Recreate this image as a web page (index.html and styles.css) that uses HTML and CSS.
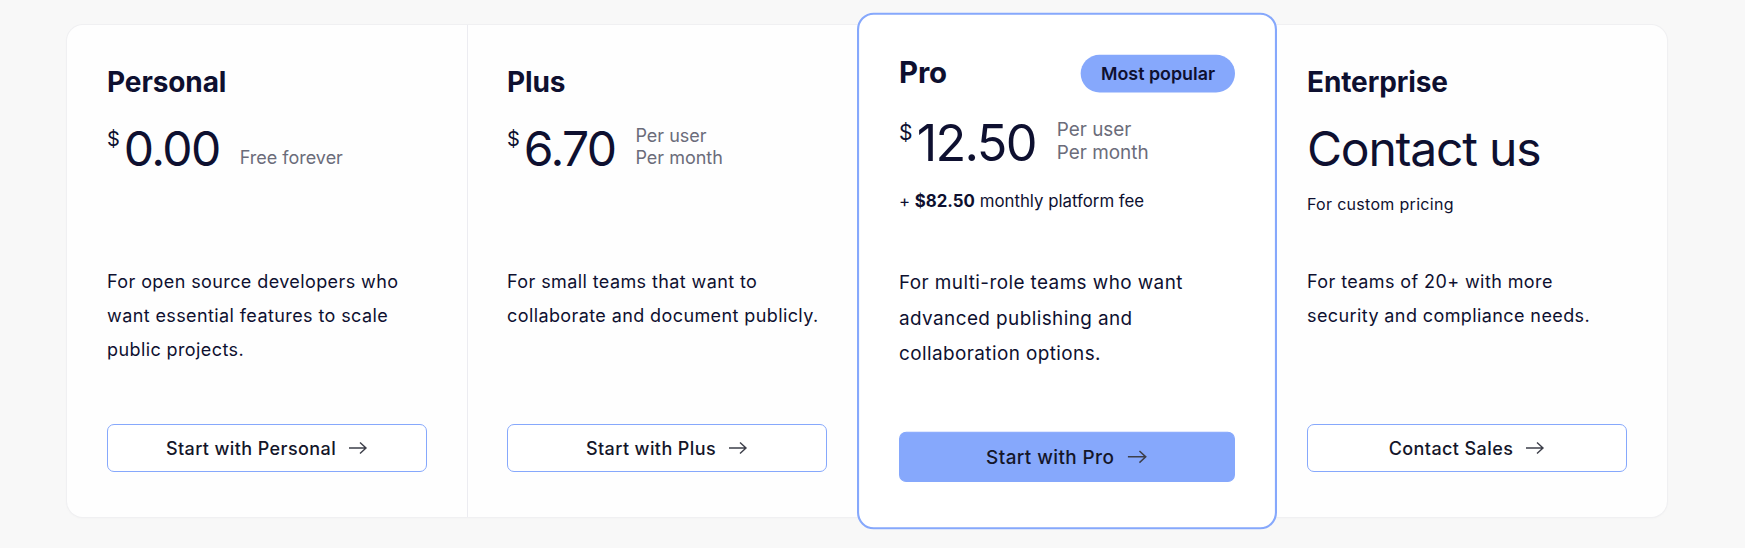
FILE: index.html
```html
<!DOCTYPE html>
<html lang="en">
<head>
<meta charset="utf-8">
<title>Pricing</title>
<link rel="stylesheet" href="styles.css">
</head>
<body>
<section class="pricing">
  <article class="plan">
    <div class="plan-head">
      <div class="title-row"><h2 class="plan-name">Personal</h2></div>
      <div class="price-row">
        <span class="currency">$</span><span class="amount">0.00</span>
        <span class="per">Free forever</span>
      </div>
    </div>
    <p class="desc">For open source developers who want essential features to scale public projects.</p>
    <a class="btn" href="#">Start with Personal <svg class="arrow" viewBox="0 0 20 14" width="20" height="14"><path d="M1 7H18M12 1.5L18 7L12 12.5" fill="none" stroke="currentColor" stroke-width="1.4"/></svg></a>
  </article>
  <article class="plan plan-divided">
    <div class="plan-head">
      <div class="title-row"><h2 class="plan-name">Plus</h2></div>
      <div class="price-row">
        <span class="currency">$</span><span class="amount">6.70</span>
        <span class="per">Per user<br>Per month</span>
      </div>
    </div>
    <p class="desc">For small teams that want to collaborate and document publicly.</p>
    <a class="btn" href="#">Start with Plus <svg class="arrow" viewBox="0 0 20 14" width="20" height="14"><path d="M1 7H18M12 1.5L18 7L12 12.5" fill="none" stroke="currentColor" stroke-width="1.4"/></svg></a>
  </article>
  <article class="plan plan-pro">
    <div class="plan-head">
      <div class="title-row"><h2 class="plan-name">Pro</h2><span class="badge">Most popular</span></div>
      <div class="price-row">
        <span class="currency">$</span><span class="amount">12.50</span>
        <span class="per">Per user<br>Per month</span>
      </div>
      <p class="sub">+ <strong>$82.50</strong> monthly platform fee</p>
    </div>
    <p class="desc">For multi-role teams who want advanced publishing and collaboration options.</p>
    <a class="btn btn-primary" href="#">Start with Pro <svg class="arrow" viewBox="0 0 20 14" width="20" height="14"><path d="M1 7H18M12 1.5L18 7L12 12.5" fill="none" stroke="currentColor" stroke-width="1.4"/></svg></a>
  </article>
  <article class="plan">
    <div class="plan-head">
      <div class="title-row"><h2 class="plan-name">Enterprise</h2></div>
      <div class="price-row">
        <span class="amount amount-text">Contact us</span>
      </div>
      <p class="sub sub-wide">For custom pricing</p>
    </div>
    <p class="desc">For teams of 20+ with more security and compliance needs.</p>
    <a class="btn" href="#">Contact Sales <svg class="arrow" viewBox="0 0 20 14" width="20" height="14"><path d="M1 7H18M12 1.5L18 7L12 12.5" fill="none" stroke="currentColor" stroke-width="1.4"/></svg></a>
  </article>
</section>
</body>
</html>
```
FILE: styles.css
```css
* { box-sizing: border-box; }
html, body { margin: 0; padding: 0; }
body {
  background: #f8f8f8;
  font-family: Inter, "Noto Sans", sans-serif;
  color: #0e1030;
  width: 1745px;
  height: 548px;
  overflow: hidden;
}
.pricing {
  display: grid;
  grid-template-columns: repeat(4, 400px);
  width: 1600px;
  height: 492px;
  margin: 25px 0 0 67px;
  background: #fefefe;
  border-radius: 16px;
  box-shadow: 0 0 0 1px #f0f0f2, 0 1px 3px rgba(0,0,0,0.04);
}
.plan {
  display: flex;
  flex-direction: column;
  padding: 40px 40px 45px 40px;
  height: 492px;
}
.plan-divided { box-shadow: inset 1px 0 0 #ececf1; }
.plan-pro {
  position: relative;
  z-index: 1;
  background: #fff;
  border: 2px solid #86a8fc;
  border-radius: 16px;
  transform: scale(1.05);
  padding: 38px 38px 43px 38px;
}
.plan-head { height: 200px; }
.title-row {
  display: flex;
  justify-content: space-between;
  align-items: center;
  height: 34px;
}
.plan-name {
  margin: 0;
  font-size: 28px;
  line-height: 34px;
  font-weight: 700;
  letter-spacing: -0.1px;
}
.badge {
  background: #86a8fc;
  border-radius: 18px;
  height: 36px;
  padding: 0 19px;
  display: flex;
  align-items: center;
  font-size: 17px;
  font-weight: 600;
  margin-top: 2px;
}
.price-row {
  display: flex;
  align-items: flex-end;
  margin-top: 26px;
}
.currency {
  align-self: flex-start;
  font-size: 20px;
  line-height: 20px;
  margin-right: 4px;
  margin-top: 4px;
}
.amount {
  font-size: 48px;
  line-height: 48px;
  font-weight: 400;
  letter-spacing: -1.6px;
}
.amount-text { letter-spacing: -1.2px; }
.per {
  margin-left: 20px;
  font-size: 18px;
  line-height: 22px;
  color: #6b6c7a;
  padding-bottom: 4px;
}
.sub {
  margin: 19px 0 0 0;
  font-size: 16px;
  line-height: 24px;
}
.sub-wide { letter-spacing: 0.3px; }
.sub strong { font-weight: 700; }
.desc {
  margin: 0;
  font-size: 18px;
  line-height: 34px;
  letter-spacing: 0.4px;
}
.btn {
  margin-top: auto;
  display: flex;
  align-items: center;
  justify-content: center;
  gap: 12px;
  height: 48px;
  border: 1px solid #86a8fc;
  border-radius: 7px;
  background: #fff;
  color: #14162a;
  text-decoration: none;
  font-size: 18px;
  font-weight: 500;
  letter-spacing: 0.4px;
}
.btn-primary {
  background: #86a8fc;
  border-color: #86a8fc;
}
.arrow { color: #3d3f4a; }
```
